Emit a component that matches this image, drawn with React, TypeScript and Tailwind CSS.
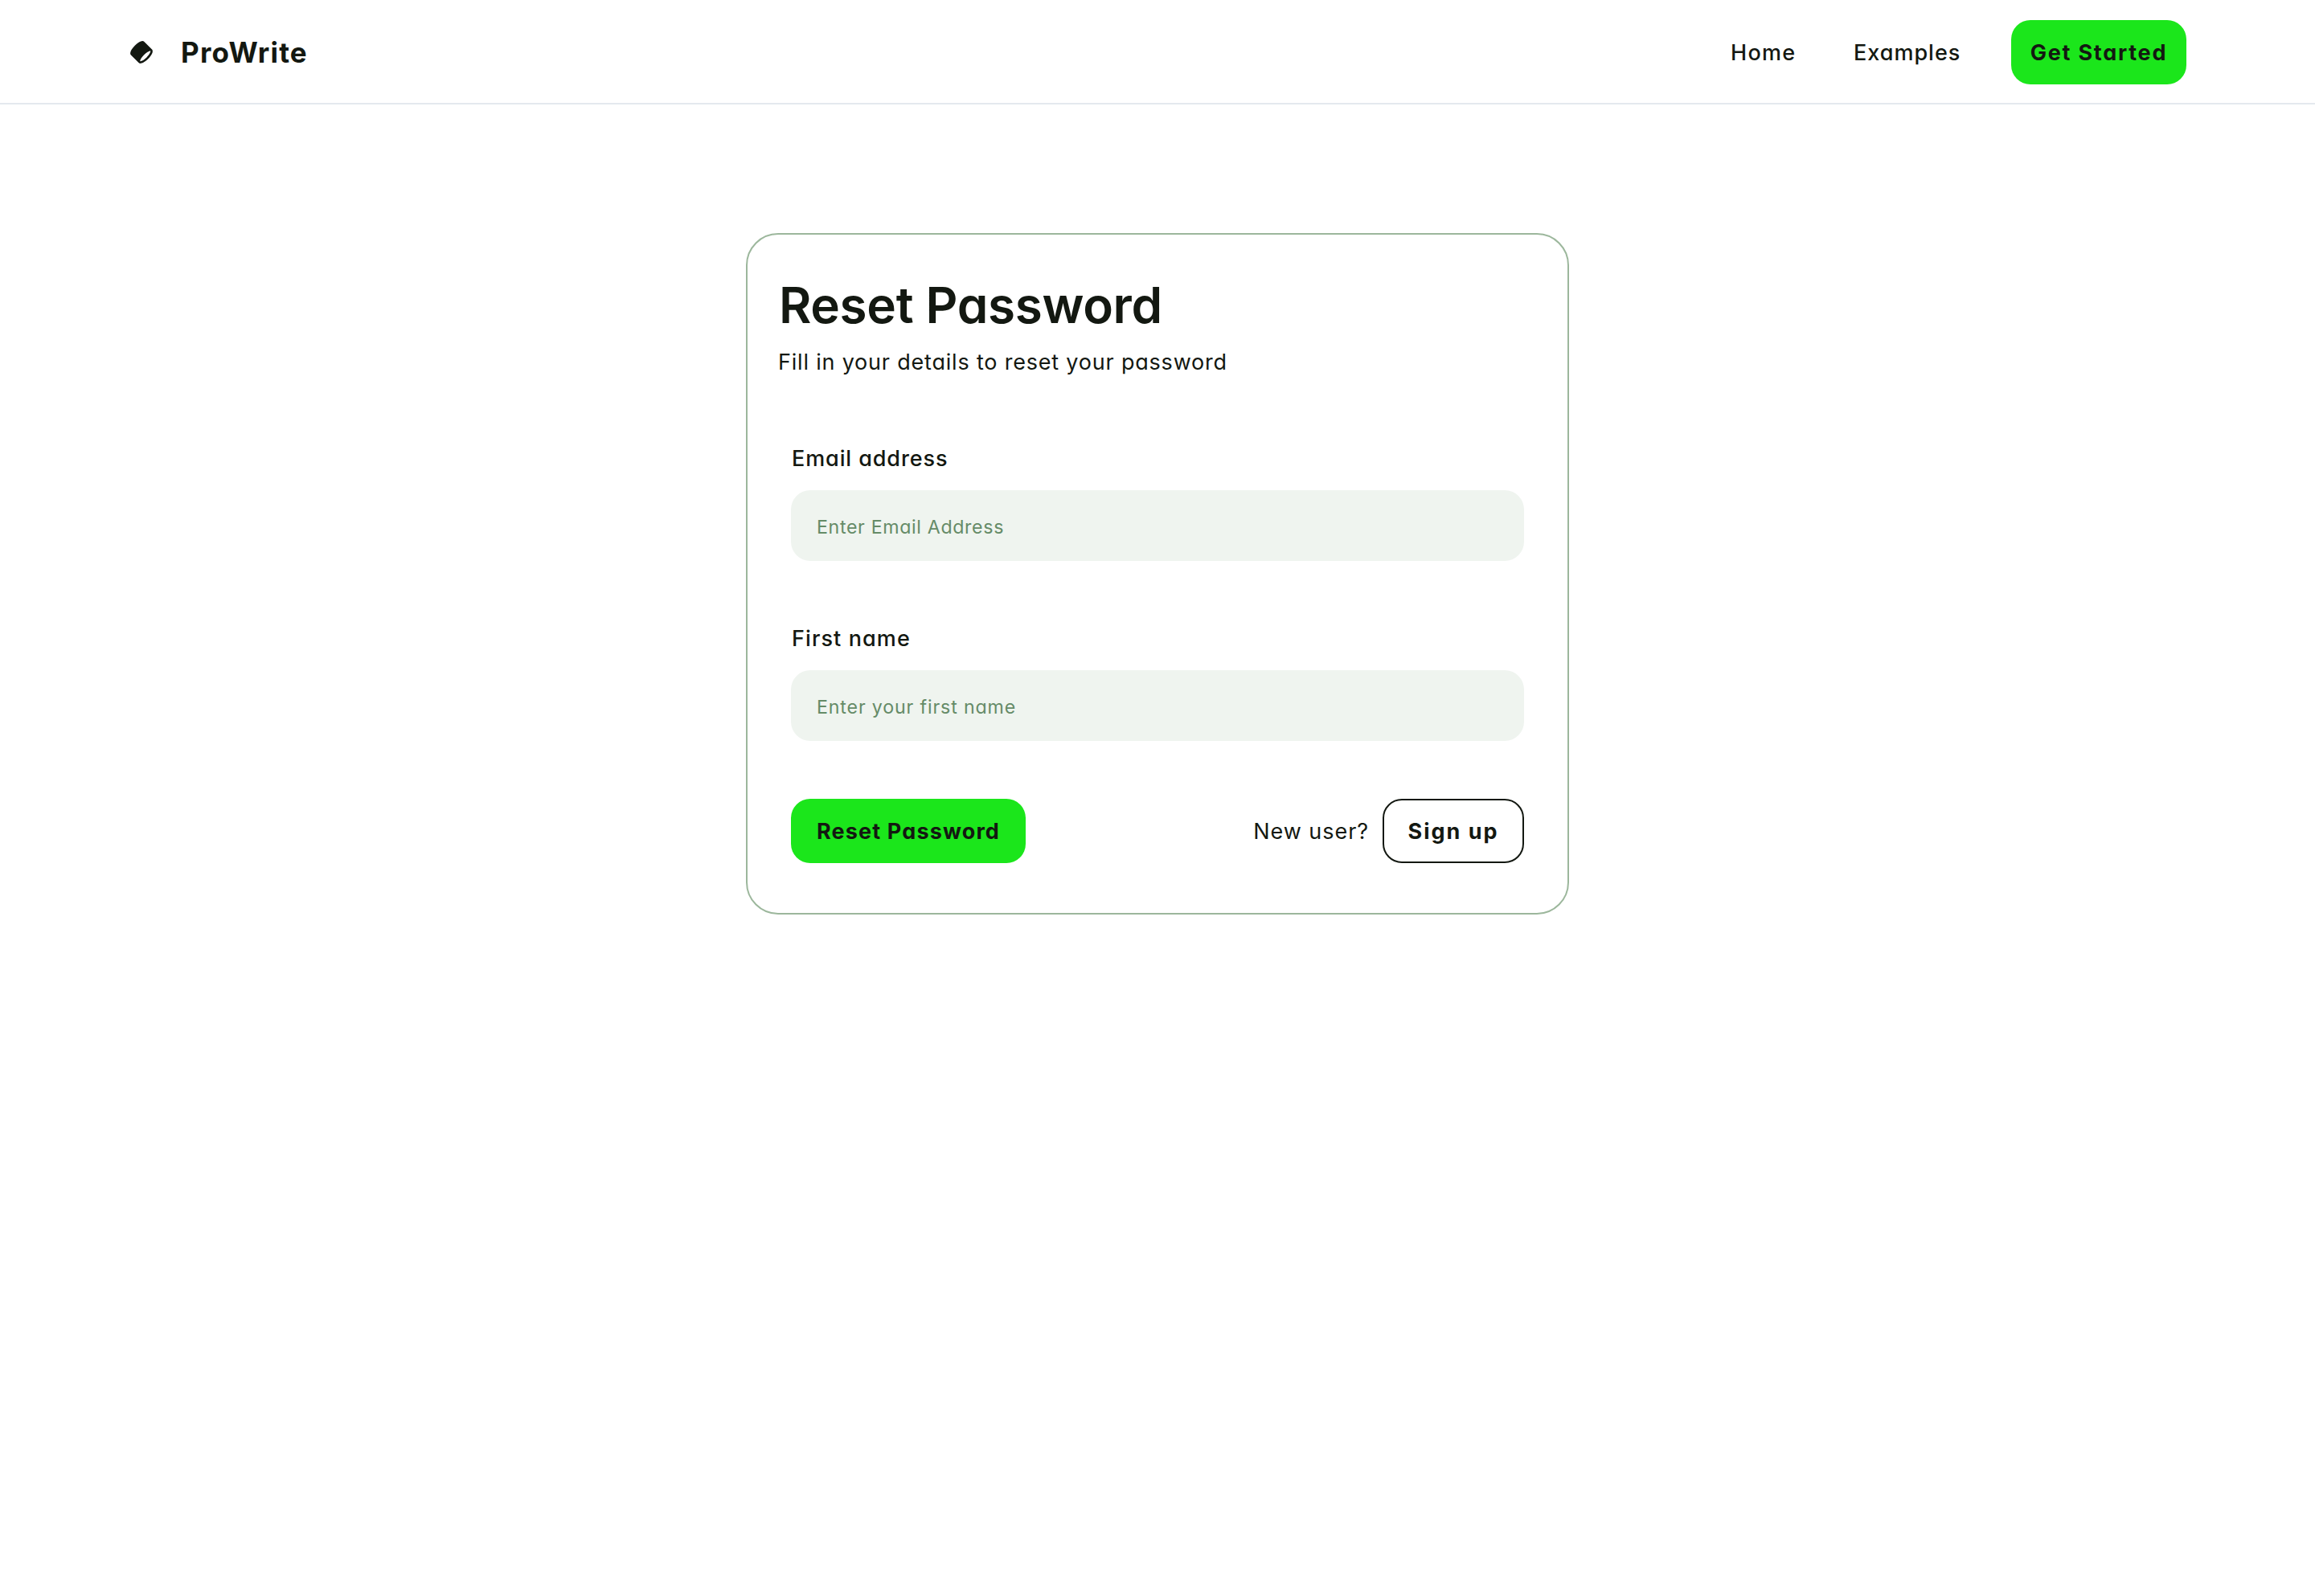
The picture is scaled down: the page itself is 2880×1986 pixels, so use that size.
function Logo() {
  return (
    <svg className="mt-[2px] size-[32px] shrink-0" viewBox="0 0 48 48" fill="none">
      <path
        fillRule="evenodd"
        clipRule="evenodd"
        fill="currentColor"
        d="M39.475 21.6262C40.358 21.4363 40.6863 21.5589 40.7581 21.5934C40.7876 21.655 40.8547 21.857 40.8082 22.3336C40.7408 23.0255 40.4502 24.0046 39.8572 25.2301C38.6799 27.6631 36.5085 30.6631 33.5858 33.5858C30.6631 36.5085 27.6632 38.6799 25.2301 39.8572C24.0046 40.4502 23.0255 40.7407 22.3336 40.8082C21.8571 40.8547 21.6551 40.7875 21.5934 40.7581C21.5589 40.6863 21.4363 40.358 21.6262 39.475C21.8562 38.4054 22.4689 36.9657 23.5038 35.2817C24.7575 33.2417 26.5497 30.9744 28.7621 28.762C30.9744 26.5497 33.2417 24.7574 35.2817 23.5037C36.9657 22.4689 38.4054 21.8562 39.475 21.6262ZM4.41189 29.2403L18.7597 43.5881C19.8813 44.7097 21.4027 44.9179 22.7217 44.7893C24.0585 44.659 25.5148 44.1631 26.9723 43.4579C29.9052 42.0387 33.2618 39.5667 36.4142 36.4142C39.5667 33.2618 42.0387 29.9052 43.4579 26.9723C44.1631 25.5148 44.659 24.0585 44.7893 22.7217C44.9179 21.4027 44.7097 19.8813 43.5881 18.7597L29.2403 4.41187C27.8527 3.02428 25.8765 3.02573 24.2861 3.36776C22.6081 3.72863 20.7334 4.58419 18.8396 5.74801C16.4978 7.18716 13.9881 9.18353 11.5858 11.5858C9.18354 13.988 7.18717 16.4978 5.74802 18.8396C4.58421 20.7334 3.72865 22.6081 3.36778 24.2861C3.02574 25.8765 3.02429 27.8527 4.41189 29.2403Z"
      />
    </svg>
  );
}

function Field({ label, placeholder, labelClass, inputClass }: { label: string; placeholder: string; labelClass: string; inputClass: string }) {
  return (
    <label className="flex flex-col">
      <span className={`pl-px text-[27px] leading-[42px] font-medium whitespace-nowrap ${labelClass}`}>{label}</span>
      <input
        className={`mt-[18px] h-[88px] w-full rounded-[24px] bg-[#eff4ef] px-[32px] pt-[4px] text-[23.2px] outline-none placeholder:text-[#658b67] placeholder:opacity-100 ${inputClass}`}
        placeholder={placeholder}
      />
    </label>
  );
}

export default function App() {
  return (
    <div className="min-h-[1986px] w-full bg-white font-['Inter',sans-serif] text-[#131811] [font-feature-settings:'cv11']">
      <header className="flex h-[130px] items-center justify-between border-b-2 border-[#e4e9ee] px-[160px]">
        <div className="flex items-center gap-[33px]">
          <Logo />
          <span className="pt-[2px] text-[35px] leading-[46px] font-bold tracking-[1.2px] whitespace-nowrap">ProWrite</span>
        </div>
        <nav className="flex items-center pt-[2px] text-[27px] leading-[42px] whitespace-nowrap">
          <a className="w-[153px] pt-[2px] font-medium tracking-[1.3px]">Home</a>
          <a className="w-[196px] pt-[2px] font-medium tracking-[1px]">Examples</a>
          <button className="flex h-[80px] w-[218px] items-center justify-center rounded-[24px] bg-[#1be61b] pt-[2px] font-bold tracking-[1.75px]">Get Started</button>
        </nav>
      </header>

      <main className="flex justify-center pt-[160px]">
        <section className="h-[848px] w-[1024px] rounded-[40px] border-2 border-[#9cb79c] px-[38px]">
          <h1 className="mt-[48px] pl-px text-[62px] leading-[80px] font-semibold tracking-[-0.35px] whitespace-nowrap">Reset Password</h1>
          <p className="mt-[10px] text-[27px] leading-[42px] tracking-[0.8px] whitespace-nowrap">Fill in your details to reset your password</p>
          <form className="mt-[78px] px-[16px]">
            <Field label="Email address" placeholder="Enter Email Address" labelClass="tracking-[0.9px]" inputClass="tracking-[0.65px]" />
            <div className="mt-[76px]">
              <Field label="First name" placeholder="Enter your first name" labelClass="tracking-[1.1px]" inputClass="tracking-[0.85px]" />
            </div>
            <div className="mt-[72px] flex items-center justify-between">
              <button type="button" className="flex h-[80px] w-[292px] items-center justify-center rounded-[24px] bg-[#1be61b] pt-[3px] text-[27px] font-bold tracking-[1.15px] whitespace-nowrap">Reset Password</button>
              <div className="flex items-center gap-[17px] text-[27px] whitespace-nowrap">
                <span className="pt-[3px] tracking-[0.95px]">New user?</span>
                <button type="button" className="flex h-[80px] w-[176px] items-center justify-center rounded-[24px] border-2 border-[#131811] pt-[3px] font-bold tracking-[2px]">Sign up</button>
              </div>
            </div>
          </form>
        </section>
      </main>
    </div>
  );
}
